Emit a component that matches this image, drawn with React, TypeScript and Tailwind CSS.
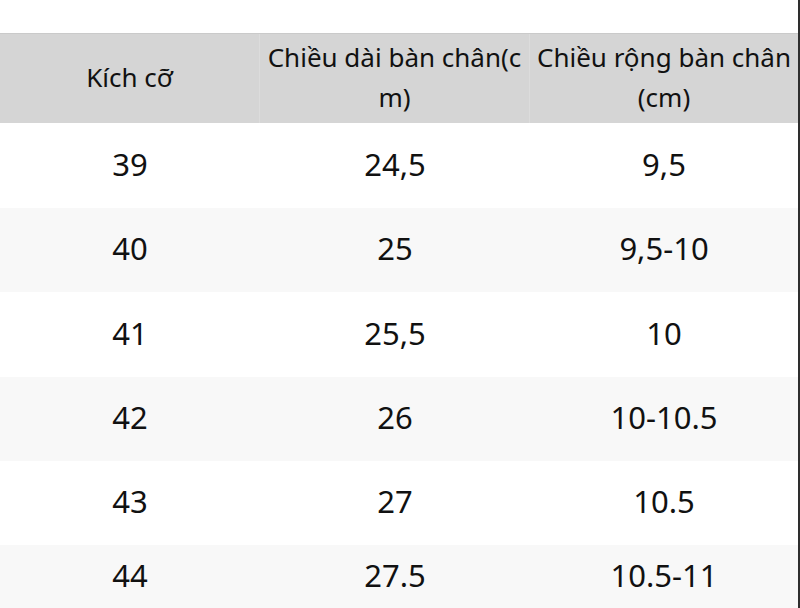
const rows = [
  { size: '39', length: '24,5', width: '9,5', h: 'h-[85px]' },
  { size: '40', length: '25', width: '9,5-10', h: 'h-[84px]' },
  { size: '41', length: '25,5', width: '10', h: 'h-[85px]' },
  { size: '42', length: '26', width: '10-10.5', h: 'h-[84px]' },
  { size: '43', length: '27', width: '10.5', h: 'h-[84px]' },
  { size: '44', length: '27.5', width: '10.5-11', h: 'h-[63px]' },
];

export default function App() {
  return (
    <div
      className="w-[800px] h-[608px] overflow-hidden bg-white flex text-[#111]"
      style={{ fontFamily: '"Noto Sans", "Open Sans", sans-serif' }}
    >
      <div className="w-[798px] flex flex-col">
        <div className="h-[33px] shrink-0" />

        {/* header */}
        <div className="h-[90px] shrink-0 grid grid-cols-[260px_270px_268px] bg-[#d5d5d5] border-t border-[#cacaca] text-[26px] leading-[40px]">
          <div className="flex items-center justify-center pb-[3px] border-r border-[#dcdcdc]">Kích cỡ</div>
          <div className="flex items-center justify-center pb-[3px] text-center border-r border-[#dcdcdc]">
            <span>
              Chiều dài bàn chân(c
              <br />
              m)
            </span>
          </div>
          <div className="flex items-center justify-center pb-[3px] text-center">
            <span>
              Chiều rộng bàn chân
              <br />
              (cm)
            </span>
          </div>
        </div>

        {/* body */}
        {rows.map((r, i) => (
          <div
            key={r.size}
            className={`${r.h} shrink-0 grid grid-cols-[260px_270px_268px] text-[31px] pb-[3px] ${
              i % 2 === 1 ? 'bg-[#f8f8f8]' : 'bg-white'
            }`}
          >
            <div className="flex items-center justify-center">{r.size}</div>
            <div className="flex items-center justify-center">{r.length}</div>
            <div className="flex items-center justify-center">{r.width}</div>
          </div>
        ))}
      </div>
      <div className="w-[2px] bg-[#2e2e2e]" />
    </div>
  );
}
